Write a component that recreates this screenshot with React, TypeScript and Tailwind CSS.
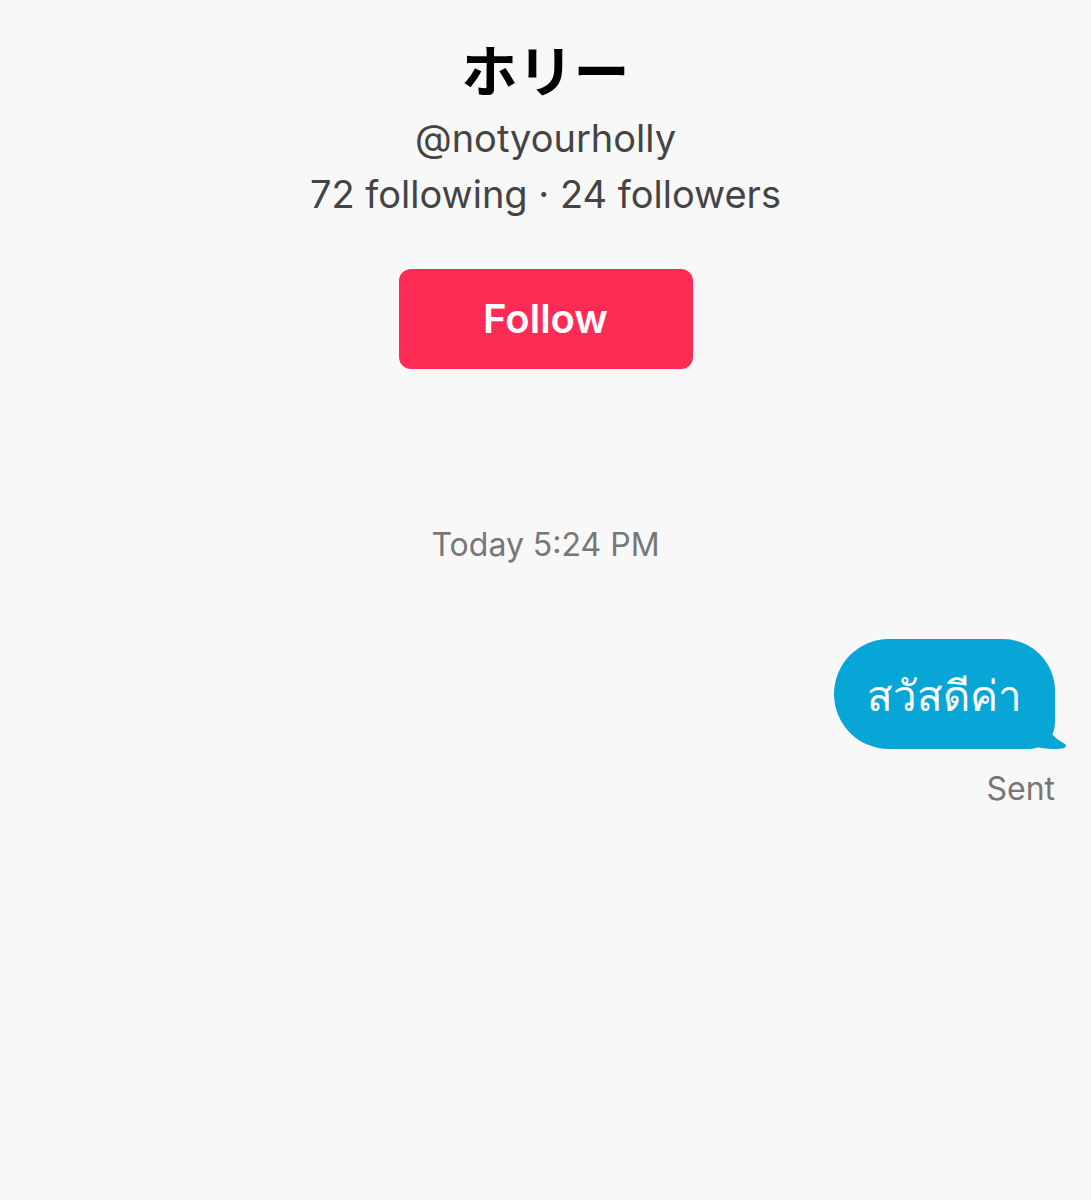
import React from 'react';

export default function App() {
  return (
    <div
      className="min-h-[1200px] w-full bg-[#f8f8f8] flex flex-col"
      style={{ fontFamily: 'Inter, "Noto Sans", "Noto Sans CJK JP", sans-serif' }}
    >
      {/* Profile header */}
      <div className="flex flex-col items-center pt-[36px]">
        <h1 className="text-[56px] leading-[64px] font-bold text-black font-['Noto_Sans_CJK_JP',sans-serif]">
          ホリー
        </h1>
        <p className="mt-[14px] text-[38px] leading-[48px] text-[#444]">@notyourholly</p>
        <p className="mt-[8px] text-[38px] leading-[48px] text-[#444]">72 following · 24 followers</p>
        <button className="mt-[51px] w-[294px] h-[100px] rounded-[12px] bg-[#fe2c55] text-white text-[40px] font-semibold">
          Follow
        </button>
      </div>

      {/* Timestamp */}
      <p className="mt-[156px] text-center text-[32px] leading-[40px] text-[#777]">Today 5:24 PM</p>

      {/* Message */}
      <div className="mt-[74px] flex flex-col items-end pr-[36px]">
        <div className="relative">
          <div className="h-[110px] px-[33px] flex items-center rounded-l-[55px] rounded-tr-[52px] rounded-br-[26px] bg-[#08a6d6] text-white text-[42px] font-['Noto_Sans','DejaVu_Sans',sans-serif]">
            สวัสดีค่า
          </div>
          <svg className="absolute right-[-13px] bottom-0" width="40" height="60" viewBox="0 0 40 60">
            <path d="M12 0 C12 30 20 44 32 52 C38 55 40 57 36 59 C28 61 14 60 0 56 L0 0 Z" fill="#08a6d6" />
          </svg>
        </div>
        <p className="mt-[20px] text-[32px] leading-[40px] text-[#777]">Sent</p>
      </div>
    </div>
  );
}
